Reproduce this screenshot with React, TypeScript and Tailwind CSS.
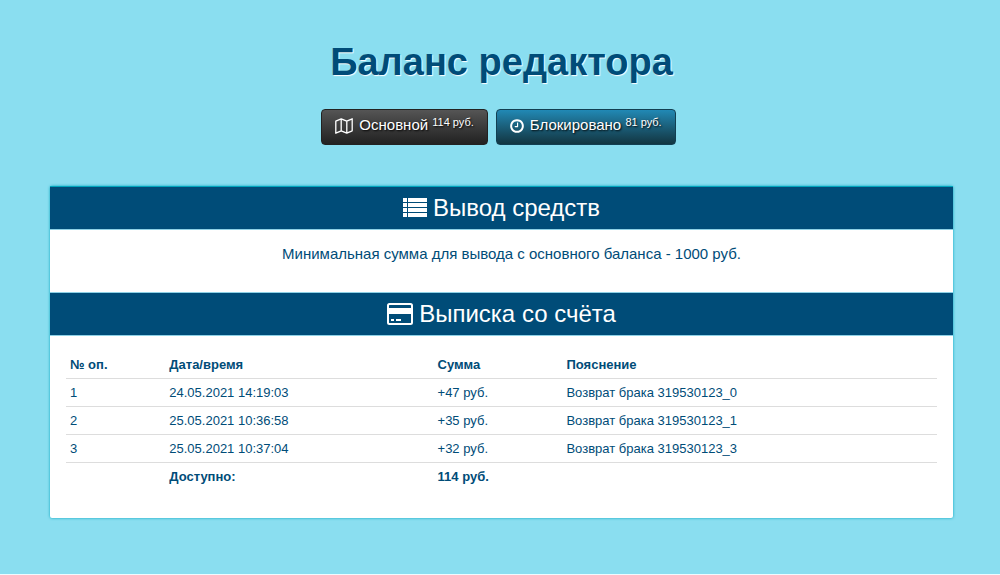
import type { ReactNode } from "react";

const operations = [
  { id: 1, date: "24.05.2021 14:19:03", sum: "+47 руб.", note: "Возврат брака 319530123_0" },
  { id: 2, date: "25.05.2021 10:36:58", sum: "+35 руб.", note: "Возврат брака 319530123_1" },
  { id: 3, date: "25.05.2021 10:37:04", sum: "+32 руб.", note: "Возврат брака 319530123_3" },
];

function MapIcon() {
  return (
    <svg className="h-4 w-[18px]" viewBox="0 0 18 16" fill="none" stroke="currentColor" strokeWidth="1.3" strokeLinejoin="round" aria-hidden="true">
      <path d="M.8 3.2 6.2.8l5.6 2.4L17.2.8v12l-5.4 2.4-5.6-2.4-5.4 2.4zM6.2.8v12M11.8 3.2v12" />
    </svg>
  );
}

function ClockIcon() {
  return (
    <svg className="h-4 w-3.5" viewBox="0 0 1536 1792" fill="currentColor" aria-hidden="true">
      <path d="M896 544v448q0 14-9 23t-23 9h-320q-14 0-23-9t-9-23v-64q0-14 9-23t23-9h224v-352q0-14 9-23t23-9h64q14 0 23 9t9 23zm416 352q0-148-73-273t-198-198-273-73-273 73-198 198-73 273 73 273 198 198 273 73 273-73 198-198 73-273zm224 0q0 209-103 385.5t-279.5 279.5-385.5 103-385.5-103-279.5-279.5-103-385.5 103-385.5 279.5-279.5 385.5-103 385.5 103 279.5 279.5 103 385.5z" />
    </svg>
  );
}

function ListIcon() {
  return (
    <svg className="h-5 w-6" viewBox="0 0 24 20" fill="currentColor" aria-hidden="true">
      <path d="M0 0h4v4H0zM5 0h19v4H5zM0 5h4v4H0zM5 5h19v4H5zM0 10h4v4H0zM5 10h19v4H5zM0 15h4v4H0zM5 15h19v4H5z" />
    </svg>
  );
}

function CardIcon() {
  return (
    <svg className="h-[22px] w-[26px]" viewBox="0 0 26 22" fill="currentColor" aria-hidden="true">
      <path fillRule="evenodd" d="M2.5 0h21A2.5 2.5 0 0 1 26 2.500v17a2.500 2.500 0 0 1-2.500 2.500h-21A2.500 2.500 0 0 1 0 19.500v-17A2.500 2.500 0 0 1 2.500 0zM2 2.600V5h22V2.600a.6.6 0 0 0-.6-.6H2.600a.6.6 0 0 0-.6.6zM2 11v8.400c0 .3.300.6.600.6h20.800c.3 0 .6-.3.600-.6V11z" />
      <path d="M4 16h3v2H4zM9 16h5v2H9z" />
    </svg>
  );
}

function SectionTitle({ children }: { children: ReactNode }) {
  return (
    <h2 className="flex h-11 items-center justify-center gap-1.5 border-y border-[#8ed1e6] bg-[#004c78] text-2xl text-white first:border-t-[#00a5bd]">
      {children}
    </h2>
  );
}

export default function App() {
  return (
    <main className="min-h-screen border-b border-[#f0fafd] bg-[#8adef0] pt-[42px] pr-[47px] pb-[54px] pl-[50px] font-['Liberation_Sans',Arial,sans-serif] text-[13px] text-[#004c78]">
      <h1 className="text-center text-[38px] leading-10 font-bold [text-shadow:1px_1px_1px_#ffffff]">
        Баланс редактора
      </h1>

      {/* Balance buttons */}
      <div className="mt-[27px] flex justify-center gap-2 pr-1.5">
        <button className="flex h-9 items-center gap-1.5 rounded border border-[#222] bg-linear-to-b from-[#555] to-[#222] px-[13px] pb-[3px] text-[15px] text-white [text-shadow:1px_1px_2px_#000000]">
          <MapIcon />
          <span>
            Основной <sup className="-top-1 text-[11px]">114 руб.</sup>
          </span>
        </button>
        <button className="flex h-9 items-center gap-1.5 rounded border border-[#123f52] bg-linear-to-b from-[#2189b5] to-[#123642] px-[13px] pb-[3px] text-[15px] text-white [text-shadow:1px_1px_2px_#000000]">
          <ClockIcon />
          <span>
            Блокировано <sup className="-top-1 text-[11px]">81 руб.</sup>
          </span>
        </button>
      </div>

      <div className="mt-[41px] rounded-xs bg-white shadow-[0_0_3px_#00a5bd]">
        <SectionTitle>
          <ListIcon />
          Вывод средств
        </SectionTitle>
        <p className="pt-[14px] pb-7 pl-5 text-center text-[15px] leading-5">
          Минимальная сумма для вывода с основного баланса - 1000 руб.
        </p>

        <SectionTitle>
          <CardIcon />
          Выписка со счёта
        </SectionTitle>
        <div className="px-4 pt-[15px] pb-7">
          <table className="w-full table-fixed text-left leading-[19px] [&_td]:px-1 [&_td]:py-1 [&_th]:px-1 [&_th]:py-1">
            <colgroup>
              <col className="w-[11.4%]" />
              <col className="w-[30.8%]" />
              <col className="w-[14.8%]" />
              <col />
            </colgroup>
            <thead>
              <tr>
                <th>№ оп.</th>
                <th>Дата/время</th>
                <th>Сумма</th>
                <th>Пояснение</th>
              </tr>
            </thead>
            <tbody>
              {operations.map((op) => (
                <tr key={op.id} className="border-t border-[#ddd]">
                  <td>{op.id}</td>
                  <td>{op.date}</td>
                  <td>{op.sum}</td>
                  <td>{op.note}</td>
                </tr>
              ))}
            </tbody>
            <tfoot>
              <tr className="border-t border-[#ddd] font-bold">
                <td></td>
                <td>Доступно:</td>
                <td>114 руб.</td>
                <td></td>
              </tr>
            </tfoot>
          </table>
        </div>
      </div>
    </main>
  );
}
